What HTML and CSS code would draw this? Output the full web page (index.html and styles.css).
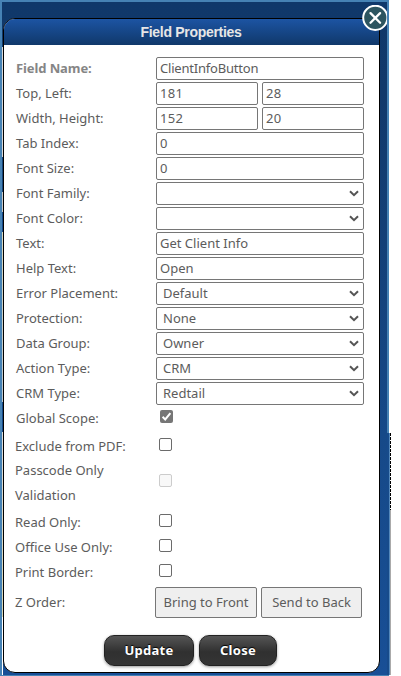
FILE: index.html
```html
<!DOCTYPE html>
<html lang="en">
<head>
<meta charset="utf-8">
<title>Field Properties</title>
<link rel="stylesheet" href="styles.css">
</head>
<body>
<div class="page">
  <div class="left-strip"></div>
  <div class="edge"><div class="dashes"></div></div>
  <main class="dialog">
    <h1 class="title">Field Properties</h1>
    <form class="fields">
      <div class="row"><label class="strong">Field Name:</label><div class="box wide"><span class="w-name">ClientInfoButton</span></div></div>
      <div class="row"><label>Top, Left:</label><div class="box num">181</div><div class="box num">28</div></div>
      <div class="row"><label>Width, Height:</label><div class="box num">152</div><div class="box num">20</div></div>
      <div class="row"><label>Tab Index:</label><div class="box wide">0</div></div>
      <div class="row"><label>Font Size:</label><div class="box wide">0</div></div>
      <div class="row"><label>Font Family:</label><div class="box select"><svg class="chev" viewBox="0 0 10 7"><path d="M1 1.2l4 4 4-4"/></svg></div></div>
      <div class="row"><label>Font Color:</label><div class="box select"><svg class="chev" viewBox="0 0 10 7"><path d="M1 1.2l4 4 4-4"/></svg></div></div>
      <div class="row"><label>Text:</label><div class="box wide">Get Client Info</div></div>
      <div class="row"><label>Help Text:</label><div class="box wide">Open</div></div>
      <div class="row"><label>Error Placement:</label><div class="box select">Default<svg class="chev" viewBox="0 0 10 7"><path d="M1 1.2l4 4 4-4"/></svg></div></div>
      <div class="row"><label>Protection:</label><div class="box select">None<svg class="chev" viewBox="0 0 10 7"><path d="M1 1.2l4 4 4-4"/></svg></div></div>
      <div class="row"><label>Data Group:</label><div class="box select">Owner<svg class="chev" viewBox="0 0 10 7"><path d="M1 1.2l4 4 4-4"/></svg></div></div>
      <div class="row"><label>Action Type:</label><div class="box select">CRM<svg class="chev" viewBox="0 0 10 7"><path d="M1 1.2l4 4 4-4"/></svg></div></div>
      <div class="row"><label>CRM Type:</label><div class="box select">Redtail<svg class="chev" viewBox="0 0 10 7"><path d="M1 1.2l4 4 4-4"/></svg></div></div>
      <div class="row scope"><label>Global Scope:</label><span class="check checked"><svg viewBox="0 0 13 13"><path d="M2.6 6.8l2.6 2.6 5.2-6.2"/></svg></span></div>
    </form>
    <section class="options">
      <div class="row"><label>Exclude from PDF:</label><span class="check"></span></div>
      <div class="row tall"><label>Passcode Only<br>Validation</label><span class="check disabled"></span></div>
      <div class="row"><label>Read Only:</label><span class="check"></span></div>
      <div class="row"><label>Office Use Only:</label><span class="check"></span></div>
      <div class="row"><label>Print Border:</label><span class="check"></span></div>
      <div class="row order"><label>Z Order:</label><button class="z front">Bring to Front</button><button class="z back">Send to Back</button></div>
    </section>
    <footer class="actions"><button class="update">Update</button><button class="close">Close</button></footer>
  </main>
  <svg class="dismiss" viewBox="0 0 25 28"><circle cx="13.3" cy="12.8" r="12.1" fill="#2d5560" stroke="#fff" stroke-width="2"/><path d="M8.5 8.1l9.6 9.6M18.1 8.1l-9.6 9.6" stroke="#fff" stroke-width="2.3" stroke-linecap="round"/></svg>
</div>
</body>
</html>
```
FILE: styles.css
```css
* { box-sizing: border-box; }
body { margin: 0; background: #fff; }
.page {
  position: relative;
  width: 389px;
  height: 676px;
  padding: 16px 0 0 1px;
  border: 2px solid #4682b4;
  border-bottom-width: 1px;
  background: linear-gradient(#10386a, #11396b 90px, #164988 430px, #184f96);
  font: 13px/25px "Noto Sans", sans-serif;
  letter-spacing: 0;
  color: #5c5c5c;
}
.left-strip {
  position: absolute;
  left: 0;
  top: 45px;
  width: 1px;
  height: 628px;
  background: linear-gradient(#d8d8d8 110px, #17477c 110px, #17477c 145px, #c9c9c9 145px, #c9c9c9 165px, #174b8b 165px, #174b8b 185px, #d9d9c0 185px, #bcc8d1 355px, #174b8b 355px, #174b8b 385px, #ddd 385px, #d9d9b8 570px, #fff 570px);
}
.edge {
  position: absolute;
  left: 385px;
  top: 431px;
  width: 4px;
  height: 242px;
  background: linear-gradient(90deg, #174b8b 2px, #5488bb 2px, #5488bb 3px, #aaa 3px);
}
.dashes {
  margin-left: 3px;
  width: 1px;
  height: 77px;
  background: repeating-linear-gradient(#000 0 3px, #fff 3px 4px);
}
.dialog {
  position: relative;
  width: 377px;
  height: 655px;
  border: 1px solid #000;
  border-radius: 12px;
  overflow: hidden;
  background: #fff;
}
.title {
  margin: 0;
  height: 26px;
  padding-right: 1px;
  background: linear-gradient(#1c54a3, #10386a);
  color: #e6e6e6;
  font: bold 14px/27px "Liberation Sans", Arial, sans-serif;
  letter-spacing: -.3px;
  text-align: center;
}
.fields { padding: 12px 0 0 12px; }
.row { display: flex; height: 25px; gap: 4px; }
label { width: 136px; flex: none; white-space: nowrap; }
.fields label { line-height: 23px; }
.strong { color: #858585; font-weight: bold; letter-spacing: -.1px; }
.w-name { letter-spacing: -.2px; }
.box {
  display: flex;
  width: 102px;
  height: 23px;
  padding-left: 3px;
  border: 1px solid #767676;
  border-radius: 2px;
  line-height: 21px;
}
.num { letter-spacing: .3px; }
.wide, .select { width: 208px; }
.select { justify-content: flex-end; padding: 0 4px 0 6px; }
.chev { width: 10px; height: 7px; margin: 7px 0 0 auto; fill: none; stroke: #555; stroke-width: 2; }
.check {
  width: 13px;
  height: 13px;
  margin: 4px 0 0 4px;
  border: 1px solid #6b6b6b;
  border-radius: 2px;
}
.scope .check { margin-top: 3px; }
.checked { border: 0; background: #767676; }
.checked svg { display: block; fill: none; stroke: #fff; stroke-width: 2; }
.options { padding: 2px 0 0 11px; }
.options .tall { height: 51px; }
.tall label { margin-top: -1px; }
.tall .check { margin-top: 15px; }
.disabled { border-color: #ccc; background: #f8f8f8; }
.order { height: 31px; margin-top: 2px; }
.order label { line-height: 31px; }
button { flex: none; padding: 0; font: inherit; letter-spacing: inherit; color: inherit; }
.z { height: 31px; border: 1px solid #767676; border-radius: 2px; background: #efefef; }
.front { width: 102px; }
.back { width: 101px; }
.actions { display: flex; gap: 5px; padding: 17px 0 0 100px; }
.actions button {
  height: 31px;
  border: 1px solid #222;
  border-radius: 10px;
  background: linear-gradient(#555, #303030 55%, #353535);
  box-shadow: 0 1px 3px #0006;
  color: #fff;
  font-weight: bold;
  letter-spacing: .3px;
  text-shadow: 0 -1px 1px #000;
}
.actions .update { width: 90px; }
.actions .close { width: 78px; }
.dismiss { position: absolute; left: 360px; top: 3px; width: 25px; height: 28px; overflow: hidden; }
```
